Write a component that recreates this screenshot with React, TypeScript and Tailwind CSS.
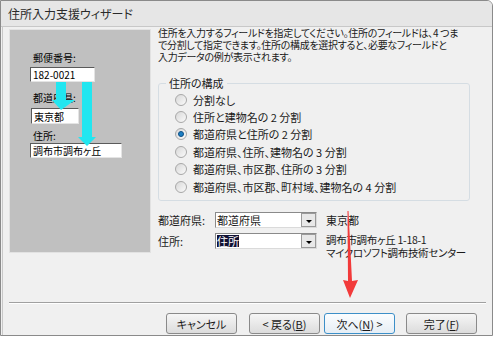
import React from "react";

const font = "font-['Noto_Sans_CJK_JP',sans-serif] [font-feature-settings:'palt']";

const Radio: React.FC<{ checked?: boolean; label: string }> = ({ checked, label }) => (
  <div className="flex items-center h-[17.4px]">
    <div className="ml-[16px] w-[12px] h-[12px] rounded-full border border-[#a8a8a8] bg-gradient-to-br from-[#d8d8d8] to-[#fafafa] flex items-center justify-center">
      {checked && (
        <div className="w-[6px] h-[6px] rounded-full bg-[#1d7fc4] border border-[#0e4f84]" />
      )}
    </div>
    <span className="ml-[6px] text-[11px] leading-[12px] text-[#1a1a1a] whitespace-nowrap">{label}</span>
  </div>
);

const Combo: React.FC<{ value: string; selected?: boolean }> = ({ value, selected }) => (
  <div className="w-[102px] h-[16px] bg-white border border-[#8a8a8a] border-b-[#dadada] border-r-[#dadada] flex">
    <div className="flex-1 flex items-center pl-[1px]">
      <span
        className={`text-[11px] leading-[12px] whitespace-nowrap ${selected ? "bg-[#111133] text-white" : "text-[#1a1a1a]"}`}
      >
        {value}
      </span>
    </div>
    <div className="w-[15px] h-full border border-[#9a9a9a] bg-[#e8e8e8] flex items-center justify-center">
      <div className="w-0 h-0 border-l-[3px] border-r-[3px] border-t-[3px] border-l-transparent border-r-transparent border-t-black mt-[2px]" />
    </div>
  </div>
);

const Button: React.FC<{ children: React.ReactNode; focused?: boolean; className?: string }> = ({
  children,
  focused,
  className,
}) => (
  <div
    className={`w-[71px] h-[21px] rounded-[3px] border flex items-center justify-center text-[11px] leading-[12px] text-[#1a1a1a] ${
      focused
        ? "border-[#3c8fc8] bg-gradient-to-b from-[#fbfdff] to-[#e6eef5]"
        : "border-[#8a8a8a] bg-gradient-to-b from-[#f6f6f6] to-[#dcdcdc]"
    } ${className ?? ""}`}
  >
    {children}
  </div>
);

const Field: React.FC<{ value: string; className: string }> = ({ value, className }) => (
  <div
    className={`bg-white border border-[#5a5a5a] border-b-[#e4e4e4] border-r-[#e4e4e4] flex items-center pl-[2px] text-[10px] leading-[11px] text-black whitespace-nowrap ${className}`}
  >
    {value}
  </div>
);

export default function App() {
  return (
    <div className={`relative w-[496px] h-[337px] bg-white ${font}`}>
      <div className="w-[493px] h-[336px] border border-[#8a8a8a] rounded-tr-[6px] bg-[#f0f0f0] flex flex-col overflow-hidden">
        {/* title bar */}
        <div className="h-[26px] bg-[#e6e6e6] border-b border-[#c8c8c8] flex items-center pl-[7px]">
          <span className="text-[12px] leading-[14px] text-[#2a2a2a]">住所入力支援ウィザード</span>
        </div>

        <div className="flex-1 flex flex-col border-l border-[#c8c8c8] ml-[1px]">
          <div className="h-[275px] flex">
            {/* left illustration */}
            <div className="shrink-0 ml-[6px] mt-[2px] w-[142px] h-[224px] bg-[#c0c0c0] border border-[#e2e2e2] flex flex-col pl-[20px] pt-[22px]">
              <span className="ml-[3px] text-[10px] leading-[12px] text-black">郵便番号:</span>
              <Field value="182-0021" className="mt-[3px] w-[65px] h-[15px]" />
              <span className="ml-[3px] mt-[10px] text-[10px] leading-[12px] text-black">都道府県:</span>
              <Field value="東京都" className="mt-[4px] ml-[1px] w-[48px] h-[16px]" />
              <span className="ml-[3px] mt-[6px] text-[10px] leading-[12px] text-black">住所:</span>
              <Field value="調布市調布ヶ丘" className="mt-[1px] w-[92px] h-[15px]" />
            </div>

            {/* right column */}
            <div className="ml-[7px] flex flex-col">
              <div className="text-[10px] leading-[12px] tracking-[-0.3px] text-[#1a1a1a] whitespace-nowrap">
                <div>住所を入力するフィールドを指定してください。住所のフィールドは、4 つま</div>
                <div>で分割して指定できます。住所の構成を選択すると、必要なフィールドと</div>
                <div>入力データの例が表示されます。</div>
              </div>

              <fieldset className="mt-[14px] w-[312px] border border-[#d5dde3] rounded-[3px] pt-[2px] pb-[5px]">
                <legend className="ml-[7px] px-[3px] text-[11px] leading-[12px] text-[#1a1a1a]">住所の構成</legend>
                <Radio label="分割なし" />
                <Radio label="住所と建物名の 2 分割" />
                <Radio label="都道府県と住所の 2 分割" checked />
                <Radio label="都道府県、住所、建物名の 3 分割" />
                <Radio label="都道府県、市区郡、住所の 3 分割" />
                <Radio label="都道府県、市区郡、町村域、建物名の 4 分割" />
              </fieldset>

              <div className="mt-[11px] flex items-start">
                <span className="w-[57px] mt-[2px] text-[11px] leading-[12px] text-[#1a1a1a]">都道府県:</span>
                <Combo value="都道府県" />
                <span className="ml-[9px] mt-[2px] text-[11px] leading-[12px] text-[#1a1a1a]">東京都</span>
              </div>
              <div className="mt-[5px] flex items-start">
                <span className="w-[57px] mt-[2px] text-[11px] leading-[12px] text-[#1a1a1a]">住所:</span>
                <Combo value="住所" selected />
                <div className="ml-[9px] text-[10.5px] leading-[13px] tracking-[-0.3px] text-[#1a1a1a] whitespace-nowrap">
                  <div>調布市調布ヶ丘 1-18-1</div>
                  <div>マイクロソフト調布技術センター</div>
                </div>
              </div>
            </div>
          </div>

          {/* separator */}
          <div className="ml-[6px] mr-[6px] h-[2px] border-t border-[#a0a0a0] border-b border-b-white" />

          {/* buttons */}
          <div className="flex pt-[9px] pl-[163px]">
            <Button>キャンセル</Button>
            <Button className="ml-[12px]">
              &lt; 戻る(<span className="underline">B</span>)
            </Button>
            <Button focused className="ml-[4px]">
              次へ(<span className="underline">N</span>) &gt;
            </Button>
            <Button className="ml-[11px]">
              完了(<span className="underline">F</span>)
            </Button>
          </div>
        </div>
      </div>

      {/* annotation arrows */}
      <svg className="absolute inset-0 pointer-events-none" width="496" height="337" viewBox="0 0 496 337">
        <polygon points="56,82 66,82 66,100 75,100 61,110 52,100 56,100" fill="#22e6f0" />
        <polygon points="82,82 92,82 92,137 96,137 87,146 78,137 82,137" fill="#22e6f0" />
        <polygon points="347.5,211 348.5,211 352,281 358,280 350,298 343,280 348,281" fill="#f23a3a" />
      </svg>
    </div>
  );
}
